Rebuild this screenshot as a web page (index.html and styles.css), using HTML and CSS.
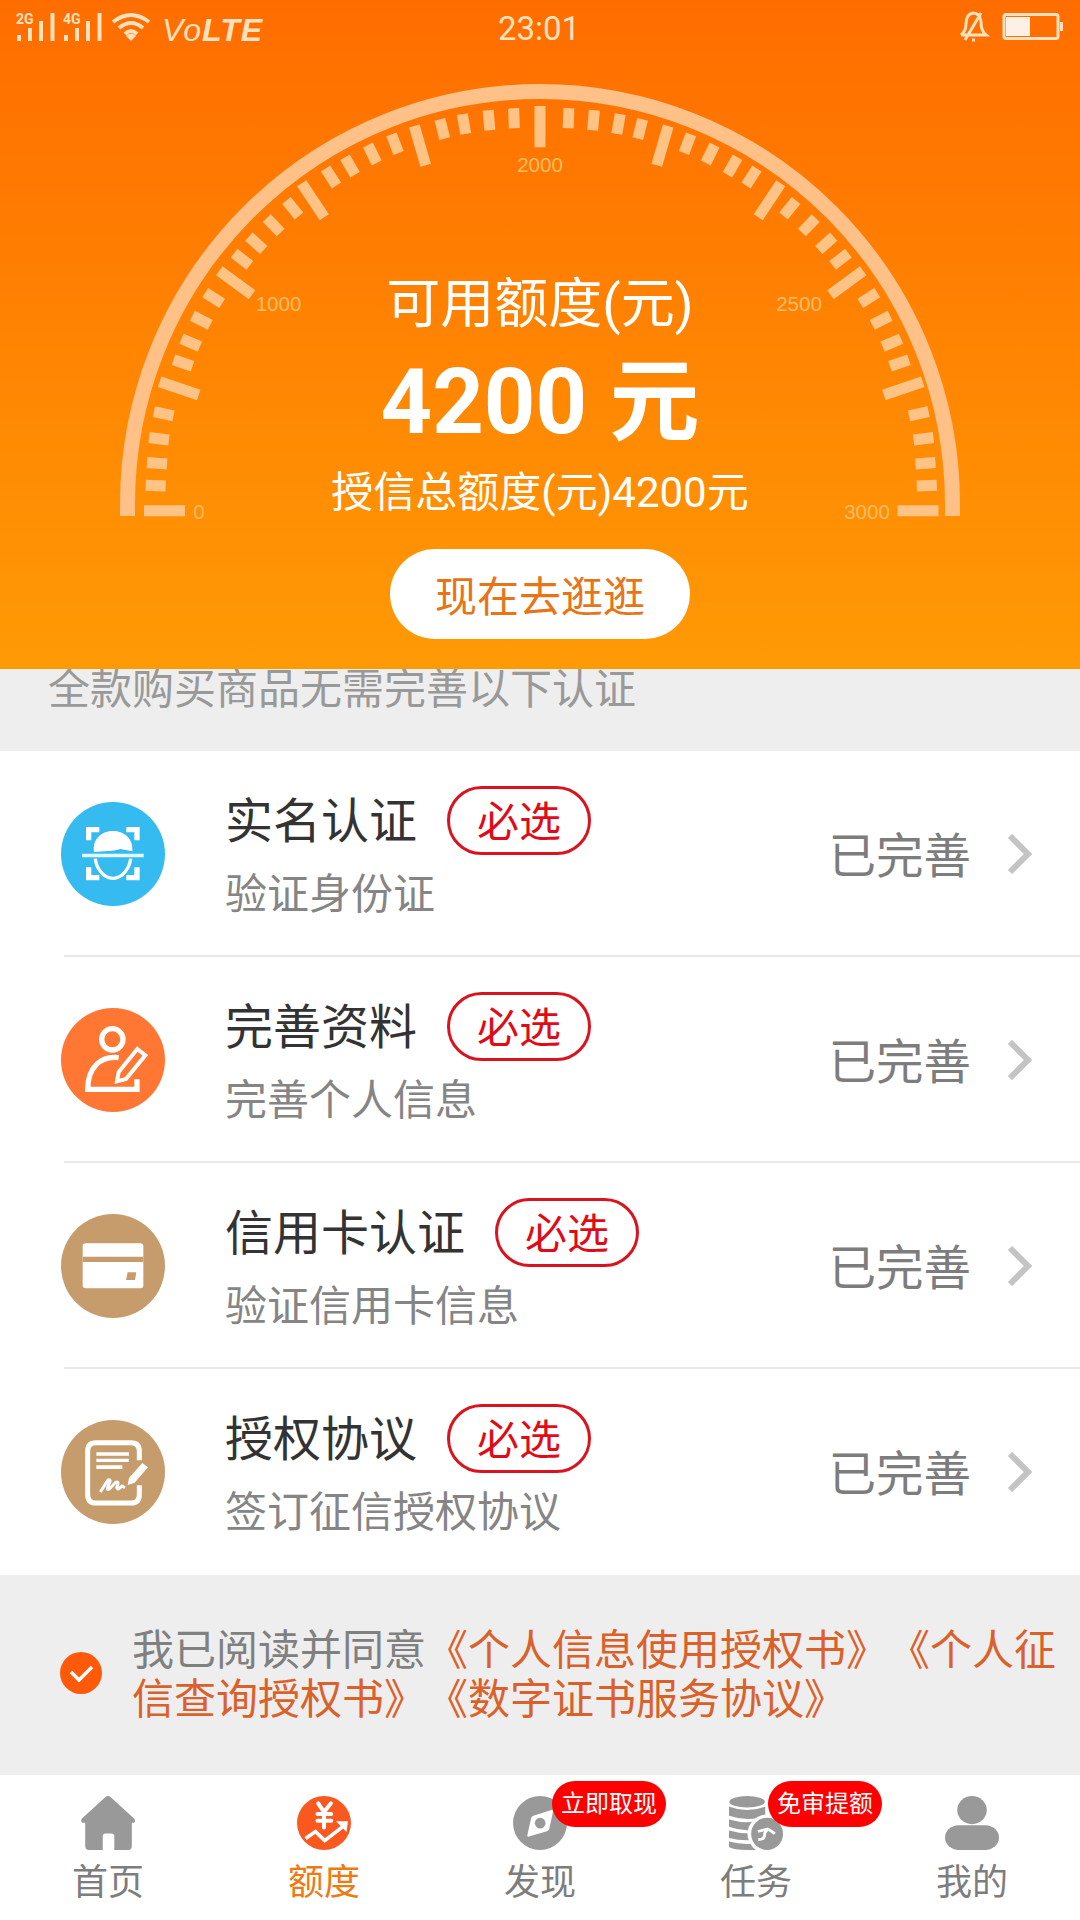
FILE: index.html
```html
<!DOCTYPE html>
<html lang="zh-CN">
<head>
<meta charset="utf-8">
<title>额度</title>
<link rel="stylesheet" href="styles.css">
</head>
<body>
<div class="app">
  <header class="hero">
    <svg class="gauge" viewBox="0 0 1080 669">
      <path class="gauge-arc" d="M127.5 516 V504 A412.5 412.5 0 0 1 952.5 504 V516"/>
      <g id="ticks" class="ticks">
        <path d="M144 510.7H185M159.7 381.7L198.7 395M219.3 270.7L252 294.7M301.7 183.3L324.3 217.3M414.3 126L425.7 165.3"/>
        <path d="M-10 0H10" transform="translate(155.7 485.7) rotate(2)"/>
        <path d="M-10 0H10" transform="translate(157 463.3) rotate(4)"/>
        <path d="M-10 0H10" transform="translate(159 438.7) rotate(7)"/>
        <path d="M-10 0H10" transform="translate(163.7 413.7) rotate(12)"/>
        <path d="M-10 0H10" transform="translate(183 363) rotate(19)"/>
        <path d="M-10 0H10" transform="translate(190.7 342.7) rotate(23)"/>
        <path d="M-10 0H10" transform="translate(201.3 320.3) rotate(27)"/>
        <path d="M-10 0H10" transform="translate(213.7 298) rotate(32)"/>
        <path d="M-10 0H10" transform="translate(242 259.3) rotate(38)"/>
        <path d="M-10 0H10" transform="translate(256.3 243.3) rotate(42)"/>
        <path d="M-10 0H10" transform="translate(273.7 225.3) rotate(46)"/>
        <path d="M-10 0H10" transform="translate(292.7 208.3) rotate(51)"/>
        <path d="M-10 0H10" transform="translate(331 177) rotate(57)"/>
        <path d="M-10 0H10" transform="translate(350 166) rotate(60)"/>
        <path d="M-10 0H10" transform="translate(372.3 154) rotate(64)"/>
        <path d="M-10 0H10" transform="translate(395 143.7) rotate(69)"/>
        <path d="M-10 0H10" transform="translate(442.3 129) rotate(76)"/>
        <path d="M-10 0H10" transform="translate(464 124) rotate(80)"/>
        <path d="M-10 0H10" transform="translate(489 120.3) rotate(85)"/>
        <path d="M-10 0H10" transform="translate(514 118.3) rotate(88)"/>
      </g>
      <use href="#ticks" transform="translate(1082.5 0) scale(-1 1)"/>
      <path class="ticks" d="M540 106V147.3"/>
      <g class="gauge-labels">
        <text x="199" y="518.5">0</text>
        <text x="278.500" y="311">1000</text>
        <text x="540" y="172">2000</text>
        <text x="799" y="311">2500</text>
        <text x="867" y="518.5">3000</text>
      </g>
    </svg>
    <div class="status-bar">
      <svg class="signals" width="140" height="40" viewBox="0 0 140 40">
        <g id="bars"><path d="M1 35h4v6H1zM12 28h4v13h-4zM23 21h4v20h-4zM34.500 13h4v28h-4z"/></g>
        <use href="#bars" x="47"/>
        <text x="0" y="24">2G</text>
        <text x="47" y="24">4G</text>
        <g class="wifi"><path d="M97 22Q115 8 133 22M103 28Q115 18 127 28M109 34Q115 28 121 34"/></g>
        <path d="M110 36Q115 31 120 36L115 41Z"/>
      </svg>
      <span class="volte">Vo<b>LTE</b></span>
      <span class="time">23:01</span>
      <svg class="device" width="106" height="40" viewBox="0 0 106 40">
        <path class="line" d="M2 35H27Q22 31 22 22Q21 13 14 13Q7 14 7 24Q7 31 2 35M22 13L6 40M13 40H16"/>
        <rect class="line" x="45" y="14.500" width="54" height="24" rx="2"/>
        <path d="M101 22h3v9h-3z"/>
        <path class="charge" d="M47 17h24v19H47z"/>
      </svg>
    </div>
    <div class="quota">
      <div class="quota-title">可用额度(元)</div>
      <div class="quota-value">4200 元</div>
      <div class="quota-total">授信总额度(元)4200元</div>
      <div class="go-button">现在去逛逛</div>
    </div>
  </header>

  <div class="notice">全款购买商品无需完善以下认证</div>

  <main class="list">
    <section class="row">
      <svg class="row-icon" viewBox="62 66 312 312">
        <circle cx="218" cy="222" r="156" fill="#35bbf0"/>
        <path d="M145 181V149H177M258 149H290V181M290 262V293H258M177 293H145V262" fill="none" stroke="#fff" stroke-width="16"/>
        <path d="M161 216C150 132 284 132 276 214L240 207C225 214 185 213 161 216Z" fill="#fff"/>
        <path d="M165 236C167 262 188 295 218 295C248 295 268 262 271 236" fill="none" stroke="#fff" stroke-width="10"/>
        <path d="M125 221H310V232H125Z" fill="#e6fbff"/>
      </svg>
      <div class="row-main">
        <div class="row-head"><span class="row-title">实名认证</span><span class="required">必选</span></div>
        <div class="row-sub">验证身份证</div>
      </div>
      <span class="row-state">已完善</span>
      <svg class="chevron" viewBox="0 0 26 40"><path d="M3 2L21 20L3 38"/></svg>
    </section>
    <section class="row">
      <svg class="row-icon" viewBox="61 84 312 312">
        <circle cx="217" cy="240" r="156" fill="#ff7733"/>
        <g fill="none" stroke="#fff">
          <circle cx="215" cy="178" r="32" stroke-width="16"/>
          <path d="M234 233C178 226 141 265 141 328H289V298" stroke-width="16"/>
          <path d="M290 207L314 226L256 297L229 304L234 276Z" stroke-width="12"/>
        </g>
      </svg>
      <div class="row-main">
        <div class="row-head"><span class="row-title">完善资料</span><span class="required">必选</span></div>
        <div class="row-sub">完善个人信息</div>
      </div>
      <span class="row-state">已完善</span>
      <svg class="chevron" viewBox="0 0 26 40"><path d="M3 2L21 20L3 38"/></svg>
    </section>
    <section class="row">
      <svg class="row-icon" viewBox="62 72 312 312">
        <circle cx="218" cy="228" r="156" fill="#c69c6d"/>
        <rect x="127" y="160" width="182" height="135" rx="9" fill="#fff"/>
        <path d="M127 200H309V216H127ZM262 247H288L284 270H257Z" fill="#c69c6d"/>
      </svg>
      <div class="row-main">
        <div class="row-head"><span class="row-title">信用卡认证</span><span class="required">必选</span></div>
        <div class="row-sub">验证信用卡信息</div>
      </div>
      <span class="row-state">已完善</span>
      <svg class="chevron" viewBox="0 0 26 40"><path d="M3 2L21 20L3 38"/></svg>
    </section>
    <section class="row">
      <svg class="row-icon" viewBox="62 689 312 312">
        <circle cx="218" cy="845" r="156" fill="#c69c6d"/>
        <path d="M297 810V782Q297 757 272 757H167Q142 757 142 782V913Q142 938 167 938H272Q297 938 297 913V885" fill="none" stroke="#fff" stroke-width="15"/>
        <path d="M168 786H266V796H168ZM168 805H266V815H168ZM168 825H246V836H168ZM306 818L323 831L283 877L262 884L266 863Z" fill="#fff"/>
        <path d="M180 905L203 869Q211 866 209 874L201 893Q201 901 208 895L226 876Q235 873 233 881L229 892Q231 899 237 894L245 887L254 892" fill="none" stroke="#fff" stroke-width="9"/>
      </svg>
      <div class="row-main">
        <div class="row-head"><span class="row-title">授权协议</span><span class="required">必选</span></div>
        <div class="row-sub">签订征信授权协议</div>
      </div>
      <span class="row-state">已完善</span>
      <svg class="chevron" viewBox="0 0 26 40"><path d="M3 2L21 20L3 38"/></svg>
    </section>
  </main>

  <div class="agreement">
    <svg class="check" viewBox="0 0 42 42"><circle cx="21" cy="21" r="21" fill="#ff5a0a"/><path d="M11 20L19 28L32 15" fill="none" stroke="#fff" stroke-width="3.500"/></svg>
    <p class="terms">我已阅读并同意<a>《个人信息使用授权书》《个人征<br>信查询授权书》《数字证书服务协议》</a></p>
  </div>

  <nav class="tabs">
    <div class="tab">
      <svg class="tab-icon" viewBox="235 78 154 161" preserveAspectRatio="none"><path d="M304 82Q312 74 320 82L387 146Q394 158 380 158V228Q380 239 369 239H330V198Q330 190 321 190H305Q297 190 297 198V239H258Q247 239 247 228V158H240Q233 156 237 146Z"/></svg>
      <span>首页</span>
    </div>
    <div class="tab active">
      <svg class="tab-icon" viewBox="862 78 158 161" preserveAspectRatio="none">
        <ellipse cx="941" cy="158.500" rx="79" ry="80.500"/>
        <path class="cut" d="M924 100L941 126L961 100M941 126V172M922 132H962M922 152H962" stroke-width="12" stroke-linecap="round"/>
        <path class="cut" d="M887 205L916 184L943 211L999 167" stroke-width="11"/>
        <path d="M976 153H1011L1007 185Z" fill="#fff"/>
      </svg>
      <span>额度</span>
    </div>
    <div class="tab">
      <svg class="tab-icon" viewBox="36 78 143 161" preserveAspectRatio="none">
        <ellipse cx="107.500" cy="158.500" rx="71.500" ry="80.500"/>
        <path d="M90 137L138 120Q143 119 142 125L132 176Q131 181 126 183L78 199Q72 200 74 194L84 144Q85 139 90 137Z" fill="#fff"/>
        <ellipse cx="108" cy="159" rx="14" ry="16"/>
      </svg>
      <span>发现</span>
      <i class="bubble">立即取现</i>
    </div>
    <div class="tab">
      <svg class="tab-icon" viewBox="619 78 146 161" preserveAspectRatio="none">
        <ellipse cx="668" cy="95" rx="48" ry="17"/>
        <path d="M619 109Q668 131 717 109V139Q668 155 619 137ZM619 148Q668 164 717 148V170Q668 190 619 170ZM619 181Q668 197 717 181V203Q668 217 619 203ZM619 214Q668 228 717 214V239H668Q630 239 619 230Z"/>
        <ellipse cx="722" cy="191" rx="53" ry="58" fill="#fff"/>
        <ellipse cx="722" cy="191" rx="43" ry="48"/>
        <path class="cut" d="M697 184L724 176L743 190M698 208Q715 208 715 195Q715 185 724 177" stroke-width="8"/>
      </svg>
      <span>任务</span>
      <i class="bubble">免审提额</i>
    </div>
    <div class="tab">
      <svg class="tab-icon" viewBox="1203 78 146 161" preserveAspectRatio="none"><ellipse cx="1276" cy="120" rx="40" ry="42"/><rect x="1203" y="165" width="146" height="74" rx="37"/></svg>
      <span>我的</span>
    </div>
  </nav>
</div>
</body>
</html>
```
FILE: styles.css
```css
* { box-sizing: border-box; }
body {
  margin: 0;
  font-family: Roboto, "Noto Sans CJK SC", sans-serif;
  text-spacing-trim: space-all;
}
.app {
  width: 1080px;
  height: 1920px;
  display: flex;
  flex-direction: column;
  background: #fff;
  overflow: hidden;
}

.hero {
  position: relative;
  height: 669px;
  flex: none;
  background: linear-gradient(#ff6d00, #ff9a05);
}
.gauge { position: absolute; left: 0; top: 0; width: 1080px; height: 669px; }
.gauge-arc { fill: none; stroke: #ffc187; stroke-width: 15; }
.ticks { fill: none; stroke: #ffc485; stroke-width: 11; }
.gauge-labels {
  fill: #ffbd62;
  font-family: "Liberation Sans", sans-serif;
  font-size: 20.5px;
  text-anchor: middle;
}

.status-bar {
  position: relative;
  display: grid;
  grid-template-columns: 146px 297px 160px 1fr;
  height: 56px;
  padding: 0 15px 0 16px;
  color: #ffe2bd;
}
.signals, .device { overflow: visible; fill: #ffe2bd; }
.device { justify-self: end; }
.device .charge { fill: #fff0e6; }
.signals text { font: bold 14px Roboto, sans-serif; }
.wifi path, .device .line { fill: none; stroke: #ffe2bd; stroke-width: 3; }
.wifi path { stroke-width: 4; }
.volte { font: italic 32px/60px "Liberation Sans", sans-serif; letter-spacing: 1px; }
.time { font-size: 33px; line-height: 58px; text-align: center; }

.quota {
  position: relative;
  display: flex;
  flex-direction: column;
  align-items: center;
  padding-top: 209px;
  color: #fff;
}
.quota-title { font-size: 54px; line-height: 80px; }
.quota-value { font-size: 90px; line-height: 116px; font-weight: 700; }
.quota-total { font-size: 42px; line-height: 64px; }
.go-button {
  width: 300px;
  height: 90px;
  margin-top: 24px;
  border-radius: 45px;
  background: #fff;
  color: #e8741a;
  font-size: 42px;
  line-height: 98px;
  text-align: center;
}

.notice {
  height: 82px;
  flex: none;
  padding-left: 48px;
  background: #eee;
  color: #999;
  font-size: 42px;
  line-height: 42px;
}

.row {
  display: flex;
  align-items: center;
  height: 206px;
  padding: 0 47px 0 60.5px;
  background: linear-gradient(#e9e9e9, #e9e9e9) 64px 204px / 1016px 2px no-repeat;
}
.row:last-child { background: none; }
.row-icon { width: 104px; height: 104px; }
.row-main { flex: 1; padding: 12px 0 0 60.5px; }
.row-head { display: flex; align-items: center; gap: 30px; height: 70px; }
.row-title { padding-top: 4px; color: #333; font-size: 48px; line-height: 70px; }
.required {
  width: 144px;
  height: 69px;
  border: 3px solid #d9141e;
  border-radius: 35px;
  color: #e00b16;
  font-size: 42px;
  line-height: 68px;
  text-align: center;
}
.row-sub { color: #858585; font-size: 42px; line-height: 80px; }
.row-state { padding-top: 5px; color: #7d7d7d; font-size: 47.5px; line-height: 70px; margin-right: 36px; }
.chevron { width: 26px; height: 40px; fill: none; stroke: #c4c4c4; stroke-width: 6; }

.agreement {
  display: flex;
  align-items: center;
  height: 200px;
  padding: 0 0 4px 60px;
  background: #eee;
}
.check { width: 42px; height: 42px; }
.terms {
  margin: 0 0 0 30px;
  padding-top: 4px;
  color: #808080;
  font-size: 42px;
  line-height: 49px;
  white-space: nowrap;
}
.terms a { color: #db612b; }

.tabs {
  display: grid;
  grid-template-columns: repeat(5, 216px);
  height: 145px;
}
.tab {
  position: relative;
  display: flex;
  flex-direction: column;
  align-items: center;
  padding-top: 21px;
  color: #7d7d7d;
  font-size: 36px;
  line-height: 66px;
}
.tab.active { color: #ee7a12; }
.tab-icon { width: 54px; height: 54px; fill: #999; }
.active .tab-icon { fill: #f9591f; }
.tab-icon .cut { fill: none; stroke: #fff; }
.bubble {
  position: absolute;
  left: 120px;
  top: 6px;
  width: 114px;
  height: 46px;
  border-radius: 23px;
  background: #f00;
  color: #fff;
  font-size: 24px;
  font-style: normal;
  line-height: 46px;
  text-align: center;
}
```
